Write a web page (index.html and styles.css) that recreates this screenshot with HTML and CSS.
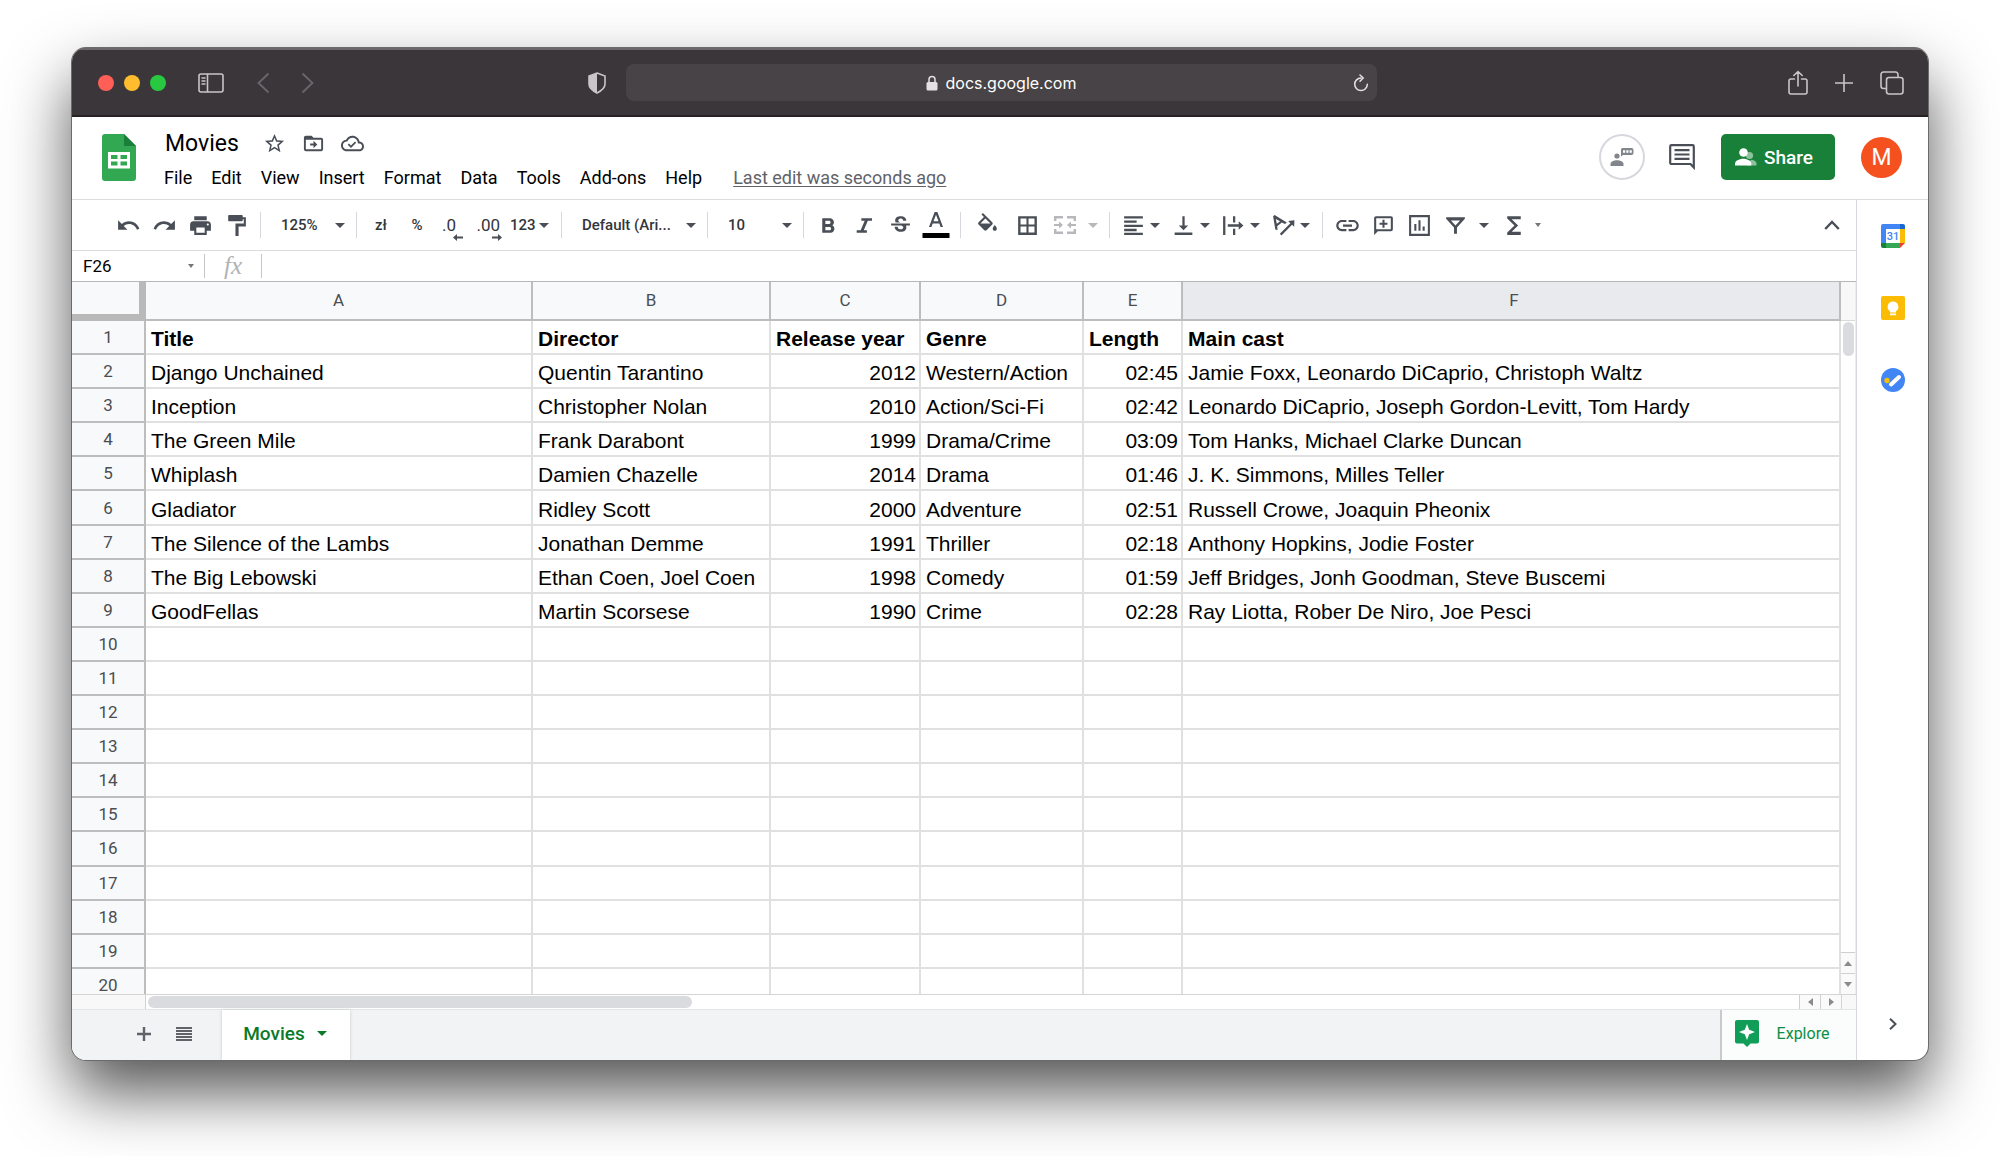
FILE: index.html
```html
<!DOCTYPE html>
<html lang="en">
<head>
<meta charset="utf-8">
<title>Movies</title>
<link rel="stylesheet" href="styles.css">
</head>
<body>
<div class="window">
  <header class="browser-bar">
    <div class="browser-left">
      <div class="lights"><span class="light red"></span><span class="light amber"></span><span class="light green"></span></div>
      <button class="chrome-btn sidebar-btn" aria-label="Sidebar"><svg width="26" height="20" viewBox="0 0 26 20" fill="none" stroke="#c9c5c9" stroke-width="1.6"><rect x="1" y="1" width="24" height="18" rx="2"/><path d="M9.5 1v18M3.5 5h4M3.500 8h4M3.500 11h4"/></svg></button>
      <button class="chrome-btn back-btn" aria-label="Back"><svg width="12" height="20" viewBox="0 0 12 20" fill="none" stroke="#6b666b" stroke-width="1.8" stroke-linecap="round"><path d="M11 1 1.500 10 11 19"/></svg></button>
      <button class="chrome-btn" aria-label="Forward"><svg width="12" height="20" viewBox="0 0 12 20" fill="none" stroke="#6b666b" stroke-width="1.8" stroke-linecap="round"><path d="M1 1l9.500 9L1 19"/></svg></button>
      <button class="chrome-btn shield-btn" aria-label="Privacy report"><svg width="18" height="22" viewBox="0 0 18 22"><path d="M9 1 17 4v8c0 4-3 6.500-8 9-5-2.500-8-5-8-9V4z" fill="none" stroke="#c9c5c9" stroke-width="1.600"/><path d="M9 1v20c-5-2.500-8-5-8-9V4z" fill="#c9c5c9"/></svg></button>
    </div>
    <div class="address">
      <span class="address-text"><svg width="12" height="16" viewBox="0 0 12 16"><path d="M3 7V4.500a3 3 0 0 1 6 0V7" fill="none" stroke="#e3e1e3" stroke-width="1.500"/><rect x=".5" y="7" width="11" height="8.500" rx="1.500" fill="#e3e1e3"/></svg>docs.google.com</span>
      <button class="chrome-btn reload-btn" aria-label="Reload"><svg width="16" height="18" viewBox="0 0 16 18" fill="none" stroke="#e3e1e3" stroke-width="1.500" stroke-linecap="round"><path d="M8 4a6.300 6.300 0 1 0 6.300 6.300"/><path d="M7 1l3.200 3L7 7.200"/></svg></button>
    </div>
    <div class="browser-right">
      <button class="chrome-btn" aria-label="Share page"><svg width="20" height="26" viewBox="0 0 20 26" fill="none" stroke="#c9c5c9" stroke-width="1.600" stroke-linecap="round"><path d="M6.500 9H3a2 2 0 0 0-2 2v11a2 2 0 0 0 2 2h14a2 2 0 0 0 2-2V11a2 2 0 0 0-2-2h-3.500M10 16V1.500M5.800 5.500 10 1.500l4.200 4"/></svg></button>
      <button class="chrome-btn" aria-label="New tab"><svg width="18" height="18" viewBox="0 0 18 18" fill="none" stroke="#c9c5c9" stroke-width="1.600"><path d="M9 0v18M0 9h18"/></svg></button>
      <button class="chrome-btn" aria-label="Tab overview"><svg width="24" height="24" viewBox="0 0 24 24" fill="none" stroke="#c9c5c9" stroke-width="1.600"><path d="M6 17.500H3.500a2.500 2.500 0 0 1-2.500-2.500V3.500A2.500 2.500 0 0 1 3.500 1h12A2.500 2.500 0 0 1 18 3.500V6"/><rect x="6.500" y="6.500" width="16.500" height="16.500" rx="2.500"/></svg></button>
    </div>
  </header>

  <section class="app-header">
    <svg class="logo" width="34" height="47" viewBox="0 0 34 47"><path d="M3 0h19l12 12v32a3 3 0 0 1-3 3H3a3 3 0 0 1-3-3V3a3 3 0 0 1 3-3z" fill="#33a852"/><path d="M22 0l12 12H22z" fill="#188038"/><path d="M6 18h22v16.500H6z" fill="#fff"/><path d="M9 21h6.500v4H9zM18.500 21H25v4h-6.500zM9 27.500h6.500v4H9zM18.500 27.500H25v4h-6.500z" fill="#33a852"/></svg>
    <div class="doc">
      <div class="doc-title">
        <h1>Movies</h1>
        <button class="icon-btn" aria-label="Star"><svg class="ico small" viewBox="0 0 24 24"><path d="M22 9.240l-7.190-.62L12 2 9.190 8.630 2 9.240l5.460 4.730L5.820 21 12 17.270 18.180 21l-1.630-7.030L22 9.240zM12 15.400l-3.760 2.270 1-4.280-3.320-2.880 4.380-.38L12 6.100l1.710 4.040 4.380.38-3.320 2.880 1 4.280L12 15.400z"/></svg></button>
        <button class="icon-btn" aria-label="Move"><svg class="ico small" viewBox="0 0 24 24"><path d="M20 6h-8l-2-2H4c-1.100 0-2 .9-2 2v12c0 1.100.9 2 2 2h16c1.100 0 2-.9 2-2V8c0-1.100-.9-2-2-2zm0 12H4V8h16v10zM12 17l4-4-4-4v3H8.500v2H12z"/></svg></button>
        <button class="icon-btn" aria-label="Saved to Drive"><svg class="ico small" viewBox="0 0 24 24"><path d="M19.350 10.040C18.670 6.590 15.640 4 12 4 9.110 4 6.600 5.640 5.350 8.040 2.340 8.360 0 10.910 0 14c0 3.310 2.690 6 6 6h13c2.760 0 5-2.240 5-5 0-2.640-2.050-4.780-4.650-4.960zM19 18H6c-2.210 0-4-1.790-4-4 0-2.050 1.530-3.760 3.560-3.970l1.070-.11.5-.95C8.080 7.140 9.940 6 12 6c2.620 0 4.880 1.860 5.390 4.430l.3 1.500 1.530.11c1.560.1 2.780 1.410 2.780 2.960 0 1.650-1.350 3-3 3zm-8.600-3.800l-2.100-2.100-1.300 1.300 3.400 3.400 5.500-5.500-1.300-1.300z"/></svg></button>
      </div>
      <nav class="menu">
        <button>File</button><button>Edit</button><button>View</button><button>Insert</button><button>Format</button><button>Data</button><button>Tools</button><button>Add-ons</button><button>Help</button>
        <a href="#history">Last edit was seconds ago</a>
      </nav>
    </div>
    <div class="actions">
      <button class="present" aria-label="Present"><svg width="24" height="20" viewBox="0 0 24 20"><circle cx="7" cy="9" r="2.600" fill="#80868b"/><path d="M0.500 19v-2c0-2.600 3.500-3.800 6.500-3.800s6.500 1.200 6.500 3.800v2z" fill="#80868b"/><path d="M12.500 1h9a2 2 0 0 1 2 2v3a2 2 0 0 1-2 2h-8.500l-2 1.500V2.500A1.500 1.500 0 0 1 12.500 1z" fill="#80868b"/><path d="M13 3.200h2.200v2.600H13zM16.300 3.200h2.200v2.600h-2.200zM19.600 3.200h2.200v2.600h-2.200z" fill="#fff"/></svg></button>
      <button class="icon-btn comments" aria-label="Comments"><svg width="26" height="26" viewBox="0 0 26 26" fill="none" stroke="#4a4f57" stroke-width="2.200"><path d="M24.800 23.500 21.500 20H2.500A1.300 1.300 0 0 1 1.200 18.700V2.400A1.300 1.300 0 0 1 2.500 1.100h21A1.300 1.300 0 0 1 24.800 2.400z"/><path d="M5.500 6.200h15M5.500 10.500h15M5.500 14.800h15"/></svg></button>
      <button class="share"><svg width="22" height="18" viewBox="0 0 22 18"><circle cx="14.500" cy="7.500" r="3.600" fill="#8dc19b"/><path d="M12 17.500h9.500v-2c0-2.300-3-3.600-5.500-3.800z" fill="#8dc19b"/><circle cx="8.500" cy="4.500" r="4.300" fill="#fff"/><path d="M0 17.500v-2c0-3.300 5.500-4.800 8.300-4.800s8 1.500 8 4.800v2z" fill="#fff"/></svg>Share</button>
      <button class="avatar" aria-label="Account">M</button>
    </div>
  </section>

  <div class="workspace">
    <main class="editor">
      <div class="toolbar">
        <button class="tb" aria-label="Undo"><svg class="ico" viewBox="0 0 24 24"><path d="M12.500 8c-2.650 0-5.050.99-6.900 2.600L2 7v9h9l-3.620-3.620c1.390-1.160 3.160-1.880 5.120-1.880 3.540 0 6.550 2.310 7.600 5.500l2.370-.78C21.080 11.030 17.150 8 12.500 8z"/></svg></button>
        <button class="tb" aria-label="Redo"><svg class="ico" viewBox="0 0 24 24"><path d="M18.400 10.600C16.550 8.990 14.150 8 11.500 8c-4.650 0-8.580 3.030-9.960 7.220L3.900 16c1.050-3.190 4.050-5.500 7.600-5.500 1.950 0 3.730.72 5.120 1.880L13 16h9V7l-3.600 3.600z"/></svg></button>
        <button class="tb" aria-label="Print"><svg class="ico" viewBox="0 0 24 24"><path d="M19 8H5c-1.660 0-3 1.340-3 3v6h4v4h12v-4h4v-6c0-1.660-1.340-3-3-3zm-3 11H8v-5h8v5zm3-7c-.55 0-1-.45-1-1s.45-1 1-1 1 .45 1 1-.45 1-1 1zM18 3H6v4h12V3z"/></svg></button>
        <button class="tb" aria-label="Paint format"><svg class="ico" viewBox="0 0 24 24"><path d="M18 4V3c0-.55-.45-1-1-1H5c-.55 0-1 .45-1 1v4c0 .55.450 1 1 1h12c.55 0 1-.45 1-1V6h1v4h-8v12h3v-9h7V4h-3z"/></svg></button>
        <span class="sep"></span>
        <select class="pick zoom-pick" aria-label="Zoom"><option>125%</option></select>
        <span class="sep"></span>
        <button class="tb text">zł</button>
        <button class="tb text">%</button>
        <button class="tb decimal less" aria-label="Decrease decimal places"><span>.0</span><svg width="10" height="7" viewBox="0 0 10 7"><path d="M0 3.500 4 0v2.500h6v2H4V7z"/></svg></button>
        <button class="tb decimal more" aria-label="Increase decimal places"><span>.00</span><svg width="10" height="7" viewBox="0 0 10 7"><path d="M10 3.500 6 0v2.500H0v2h6V7z"/></svg></button>
        <button class="tb text combo"><span class="lead">123</span><span class="caret"></span></button>
        <span class="sep"></span>
        <select class="pick font-pick" aria-label="Font"><option>Default (Ari...</option></select>
        <span class="sep"></span>
        <select class="pick zoom-pick" aria-label="Font size"><option>10</option></select>
        <span class="sep"></span>
        <button class="tb" aria-label="Bold"><svg class="ico" viewBox="0 0 24 24"><path d="M15.600 11.790c.97-.67 1.650-1.770 1.650-2.790 0-2.260-1.750-4-4-4H6v14h8c2.090 0 3.700-1.700 3.700-3.790 0-1.520-.86-2.820-2.100-3.420zM9 7.500h3.500c.83 0 1.500.67 1.500 1.500s-.67 1.500-1.500 1.500H9v-3zm4 9H9v-3h4c.83 0 1.500.67 1.500 1.500s-.67 1.500-1.500 1.500z"/></svg></button>
        <button class="tb" aria-label="Italic"><svg class="ico" viewBox="0 0 24 24"><path d="M9 5v2.500h3.200L8.300 16.500H4.500V19h9.800v-2.500h-3L15.200 7.500h4V5z"/></svg></button>
        <button class="tb" aria-label="Strikethrough"><svg class="ico" viewBox="0 0 24 24"><path d="M7.240 8.750c-.26-.48-.39-1.030-.39-1.670 0-.61.130-1.160.4-1.670.26-.5.630-.93 1.110-1.290.48-.35 1.050-.63 1.700-.83.660-.19 1.390-.29 2.180-.29.810 0 1.540.11 2.210.34.660.22 1.230.54 1.690.94.470.4.830.88 1.080 1.430.25.55.380 1.150.38 1.810h-3.010c0-.31-.05-.59-.15-.85-.09-.27-.24-.49-.44-.68-.2-.19-.45-.33-.75-.44-.3-.1-.66-.16-1.060-.16-.39 0-.74.04-1.030.13-.29.090-.53.210-.72.360-.19.160-.34.340-.44.550-.1.210-.15.430-.15.660 0 .48.250.88.740 1.210.38.25.77.48 1.410.7H7.390c-.05-.08-.11-.17-.15-.25zM21 12v-2H3v2h9.620c.18.070.4.140.55.200.37.170.660.340.870.51s.350.360.430.570c.7.200.11.430.11.690 0 .23-.5.450-.14.660-.9.200-.23.380-.42.530-.19.150-.42.260-.71.350-.29.080-.63.130-1.010.13-.43 0-.83-.04-1.180-.13s-.66-.23-.91-.42c-.25-.19-.45-.44-.59-.75s-.25-.76-.25-1.210H6.400c0 .55.080 1.130.24 1.580s.37.850.650 1.210c.28.350.600.660.980.92.370.26.78.480 1.220.65.440.17.900.3 1.380.39.480.08.960.13 1.440.13.800 0 1.530-.09 2.180-.28s1.210-.45 1.670-.79c.46-.34.820-.77 1.070-1.270s.38-1.070.380-1.710c0-.6-.1-1.140-.31-1.610-.05-.11-.11-.23-.17-.33H21z"/></svg></button>
        <button class="tb" aria-label="Text color"><svg width="28" height="28" viewBox="0 0 28 28"><path d="M12.600 1 7 16h2.400l1.300-3.500h6.600l1.300 3.500H21L15.400 1zm-1.100 9.300L14 3.700l2.500 6.600z" fill="#4a4f57"/><path d="M0.500 22h27v5h-27z" fill="#000"/></svg></button>
        <span class="sep"></span>
        <button class="tb wide" aria-label="Fill color"><svg class="ico" viewBox="0 0 24 24"><path d="M16.560 8.940 7.620 0 6.210 1.410l2.380 2.380-5.150 5.150c-.59.590-.59 1.540 0 2.120l5.500 5.500c.29.290.68.440 1.060.44s.77-.15 1.060-.44l5.500-5.500c.59-.58.59-1.530 0-2.120zM5.210 10 10 5.210 14.790 10zM19 11.500s-2 2.170-2 3.500c0 1.100.9 2 2 2s2-.9 2-2c0-1.330-2-3.500-2-3.500z"/></svg></button>
        <button class="tb wide" aria-label="Borders"><svg class="ico" viewBox="0 0 24 24"><path d="M3 3v18h18V3H3zm8 15.700H5.300V13H11v5.700zM11 11H5.300V5.300H11V11zm7.700 7.700H13V13h5.700v5.700zm0-7.700H13V5.300h5.700V11z"/></svg></button>
        <button class="tb merge" disabled aria-label="Merge cells"><svg width="22" height="20" viewBox="0 0 22 20"><path d="M0 1h9v2.400H2.400V6H0zM13 1h9v5h-2.400V3.400H13zM0 14h2.400v2.600H9V19H0zM19.600 14H22v5h-9v-2.400h6.600zM0 9h5V6.500L9 10l-4 3.500V11H0zM22 9h-5V6.500L13 10l4 3.500V11h5z"/></svg><span class="caret"></span></button>
        <span class="sep"></span>
        <button class="tb combo" aria-label="Horizontal align"><svg class="ico" viewBox="0 0 24 24"><path d="M3 3h18v2.200H3zM3 7.200h12v2.200H3zM3 11.200h18v2.200H3zM3 15.200h12v2.200H3zM3 19h18v2.200H3z"/></svg><span class="caret"></span></button>
        <button class="tb combo" aria-label="Vertical align"><svg class="ico" viewBox="0 0 24 24"><path d="M16.500 12h-3.400V3h-2.200v9H7.500l4.500 4.500zM3.500 18.800v2.400h17v-2.400z"/></svg><span class="caret"></span></button>
        <button class="tb combo" aria-label="Text wrapping"><svg class="ico" viewBox="0 0 24 24"><path d="M2 3h2.200v18H2zM11.500 3h2.200v6h-2.200zM11.500 15h2.200v6h-2.200zM6.500 10.900H17V8l4.500 4-4.500 4v-2.900H6.500z"/></svg><span class="caret"></span></button>
        <button class="tb combo" aria-label="Text rotation"><svg class="ico" viewBox="0 0 24 24"><path d="M2 3l2.200 13h2.200l-.5-3.300 4.500-3.500 3 1.300 1.800-1.300L3.500 2zm2.600 2.800 4.100 2.200-3.100 2.400zM22.500 7l-6 .7 2.100 2.100L8.500 20l1.500 1.500 10.200-10.200 2 2z"/></svg><span class="caret"></span></button>
        <span class="sep"></span>
        <button class="tb" aria-label="Insert link"><svg width="27" height="27" viewBox="0 0 24 24"><path d="M3.900 12c0-1.710 1.390-3.100 3.100-3.100h4V7H7c-2.760 0-5 2.240-5 5s2.240 5 5 5h4v-1.900H7c-1.710 0-3.100-1.390-3.100-3.100zM8 13h8v-2H8v2zm9-6h-4v1.900h4c1.710 0 3.100 1.390 3.100 3.100s-1.390 3.100-3.100 3.100h-4V17h4c2.760 0 5-2.240 5-5s-2.240-5-5-5z"/></svg></button>
        <button class="tb" aria-label="Insert comment"><svg class="ico" viewBox="0 0 24 24"><path d="M4.800 3A1.800 1.800 0 0 0 3 4.800V21l3.600-3.600h12.600a1.800 1.800 0 0 0 1.800-1.800V4.800A1.800 1.800 0 0 0 19.200 3zM5 5h14v10.500H5zM11 6.500v2.800H8.200v2H11v2.800h2v-2.800h2.800v-2H13V6.500z"/></svg></button>
        <button class="tb" aria-label="Insert chart"><svg class="ico" viewBox="0 0 24 24"><path d="M2 2v20h20V2zm2 2h16v16H4zM7 10.500h2V17H7zM11 7h2v10h-2zM15 13h2v4h-2z"/></svg></button>
        <button class="tb filter" aria-label="Filter"><svg class="ico" viewBox="0 0 24 24"><path d="M3 4h18v1.500l-7.600 8.300V20h-2.800v-6.200L3 5.500zm4.600 3.200L12 12l4.400-4.800z"/></svg><span class="caret"></span></button>
        <button class="tb combo" aria-label="Functions"><svg class="ico" viewBox="0 0 24 24"><path d="M18 3H5v2.200l7 6.800-7 6.800V21h13v-3H9.300l6.200-6-6.200-6H18z"/></svg><span class="caret tiny"></span></button>
        <button class="collapse" aria-label="Hide the menus"><svg width="16" height="10" viewBox="0 0 16 10" fill="none" stroke="#4a4f57" stroke-width="2.400"><path d="M1.200 9 8 2l6.800 7"/></svg></button>
      </div>

      <div class="formula">
        <input class="name-box" aria-label="Name box" value="F26">
        <span class="caret tiny"></span>
        <span class="rule"></span>
        <label class="fx" for="fx">fx</label>
        <span class="rule"></span>
        <input class="fx-input" id="fx">
      </div>

      <div class="grid">
        <div class="viewport">
          <table>
            <colgroup><col class="c-n"><col class="c-a"><col class="c-b"><col class="c-c"><col class="c-d"><col class="c-e"><col></colgroup>
            <thead><tr><td class="corner"></td><th>A</th><th>B</th><th>C</th><th>D</th><th>E</th><th class="current">F</th></tr></thead>
            <tbody>
              <tr class="titles"><th>1</th><td>Title</td><td>Director</td><td>Release year</td><td>Genre</td><td>Length</td><td>Main cast</td></tr>
              <tr><th>2</th><td>Django Unchained</td><td>Quentin Tarantino</td><td class="num">2012</td><td>Western/Action</td><td class="num">02:45</td><td>Jamie Foxx, Leonardo DiCaprio, Christoph Waltz</td></tr>
              <tr><th>3</th><td>Inception</td><td>Christopher Nolan</td><td class="num">2010</td><td>Action/Sci-Fi</td><td class="num">02:42</td><td>Leonardo DiCaprio, Joseph Gordon-Levitt, Tom Hardy</td></tr>
              <tr><th>4</th><td>The Green Mile</td><td>Frank Darabont</td><td class="num">1999</td><td>Drama/Crime</td><td class="num">03:09</td><td>Tom Hanks, Michael Clarke Duncan</td></tr>
              <tr><th>5</th><td>Whiplash</td><td>Damien Chazelle</td><td class="num">2014</td><td>Drama</td><td class="num">01:46</td><td>J. K. Simmons, Milles Teller</td></tr>
              <tr><th>6</th><td>Gladiator</td><td>Ridley Scott</td><td class="num">2000</td><td>Adventure</td><td class="num">02:51</td><td>Russell Crowe, Joaquin Pheonix</td></tr>
              <tr><th>7</th><td>The Silence of the Lambs</td><td>Jonathan Demme</td><td class="num">1991</td><td>Thriller</td><td class="num">02:18</td><td>Anthony Hopkins, Jodie Foster</td></tr>
              <tr><th>8</th><td>The Big Lebowski</td><td>Ethan Coen, Joel Coen</td><td class="num">1998</td><td>Comedy</td><td class="num">01:59</td><td>Jeff Bridges, Jonh Goodman, Steve Buscemi</td></tr>
              <tr><th>9</th><td>GoodFellas</td><td>Martin Scorsese</td><td class="num">1990</td><td>Crime</td><td class="num">02:28</td><td>Ray Liotta, Rober De Niro, Joe Pesci</td></tr>
              <tr><th>10</th><td></td><td></td><td></td><td></td><td></td><td></td></tr>
              <tr><th>11</th><td></td><td></td><td></td><td></td><td></td><td></td></tr>
              <tr><th>12</th><td></td><td></td><td></td><td></td><td></td><td></td></tr>
              <tr><th>13</th><td></td><td></td><td></td><td></td><td></td><td></td></tr>
              <tr><th>14</th><td></td><td></td><td></td><td></td><td></td><td></td></tr>
              <tr><th>15</th><td></td><td></td><td></td><td></td><td></td><td></td></tr>
              <tr><th>16</th><td></td><td></td><td></td><td></td><td></td><td></td></tr>
              <tr><th>17</th><td></td><td></td><td></td><td></td><td></td><td></td></tr>
              <tr><th>18</th><td></td><td></td><td></td><td></td><td></td><td></td></tr>
              <tr><th>19</th><td></td><td></td><td></td><td></td><td></td><td></td></tr>
              <tr><th>20</th><td></td><td></td><td></td><td></td><td></td><td></td></tr>
            </tbody>
          </table>
        </div>
        <div class="vscroll">
          <div class="vscroll-head"></div>
          <div class="vthumb"></div>
          <button class="step first" aria-label="Scroll up"><svg width="8" height="5" viewBox="0 0 8 5"><path d="M4 0l4 5H0z"/></svg></button>
          <button class="step" aria-label="Scroll down"><svg width="8" height="5" viewBox="0 0 8 5"><path d="M4 5l4-5H0z"/></svg></button>
        </div>
        <div class="hscroll">
          <div class="hscroll-head"></div>
          <div class="htrack"><div class="hthumb"></div></div>
          <button class="hstep" aria-label="Scroll left"><svg width="5" height="8" viewBox="0 0 5 8"><path d="M0 4l5-4v8z"/></svg></button>
          <button class="hstep" aria-label="Scroll right"><svg width="5" height="8" viewBox="0 0 5 8"><path d="M5 4L0 0v8z"/></svg></button>
        </div>
        <div class="scroll-corner"></div>
      </div>

      <footer class="tabs">
        <button class="tab-btn add" aria-label="Add sheet"><svg width="14" height="14" viewBox="0 0 14 14" fill="none" stroke="#5f6368" stroke-width="2.400"><path d="M7 0v14M0 7h14"/></svg></button>
        <button class="tab-btn list" aria-label="All sheets"><svg width="16" height="14" viewBox="0 0 16 14"><path d="M0 0h16v2H0zM0 3h16v2H0zM0 6h16v2H0zM0 9h16v2H0zM0 12h16v2H0z" fill="#5f6368"/></svg></button>
        <button class="sheet-tab">Movies<span class="caret"></span></button>
        <button class="explore"><svg width="24" height="27" viewBox="0 0 24 27"><path d="M2 0h20a2 2 0 0 1 2 2v19.500a2 2 0 0 1-2 2h-6.500L12 27l-3.500-3.500H2a2 2 0 0 1-2-2V2a2 2 0 0 1 2-2z" fill="#0f9d58"/><path d="M12 4l2.200 5.800L20 12l-5.800 2.200L12 20l-2.200-5.800L4 12l5.800-2.200z" fill="#fff"/></svg>Explore</button>
      </footer>
    </main>

    <aside class="side-panel">
      <button class="icon-btn" aria-label="Calendar"><svg width="24" height="24" viewBox="0 0 24 24"><path d="M2 0h17v5H5v14H0V2a2 2 0 0 1 2-2z" fill="#4285f4"/><path d="M19 0h3a2 2 0 0 1 2 2v3h-5z" fill="#1967d2"/><path d="M19 5h5v14h-5z" fill="#fbbc04"/><path d="M5 19h14v5H5z" fill="#34a853"/><path d="M0 19h5v5H2a2 2 0 0 1-2-2z" fill="#188038"/><path d="M19 19h5l-5 5z" fill="#ea4335"/><path d="M5 5h14v14H5z" fill="#fff"/><text x="12" y="16" text-anchor="middle" class="cal-day">31</text></svg></button>
      <button class="icon-btn" aria-label="Keep"><svg width="24" height="24" viewBox="0 0 24 24"><rect width="24" height="24" rx="2" fill="#fbbc04"/><path d="M12 5.500a5.300 5.300 0 0 0-3 9.700V16.500h6v-1.300a5.300 5.300 0 0 0-3-9.700zM9 17.600h6v1.600H9z" fill="#fff"/></svg></button>
      <button class="icon-btn" aria-label="Tasks"><svg width="24" height="24" viewBox="0 0 24 24"><circle cx="12" cy="12" r="12" fill="#4285f4"/><path d="M10 16.500 18 9" stroke="#fff" stroke-width="4" stroke-linecap="round"/><circle cx="6" cy="12.500" r="2.700" fill="#fbbc04"/></svg></button>
      <button class="icon-btn panel-toggle" aria-label="Hide side panel"><svg width="8" height="12" viewBox="0 0 8 12" fill="none" stroke="#4a4f57" stroke-width="2"><path d="M1 .8 6.500 6 1 11.200"/></svg></button>
    </aside>
  </div>
</div>
</body>
</html>
```
FILE: styles.css
```css
* { box-sizing: border-box; }

body {
  margin: 0;
  min-height: 100vh;
  padding: 48px 72px 96px;
  display: flex;
  background: #fff;
  font-family: Roboto, "Liberation Sans", sans-serif;
  color: #000;
}

button, input, select {
  font: inherit;
  color: inherit;
  background: none;
  border: 0;
  padding: 0;
  margin: 0;
}
button { display: flex; align-items: center; justify-content: center; flex: none; }
svg { display: block; flex: none; }

.window {
  flex: 1;
  min-width: 0;
  display: flex;
  flex-direction: column;
  overflow: hidden;
  border-radius: 14px;
  background: #fff;
  box-shadow: 0 0 0 1px #6b6b6b, 0 32px 64px rgba(0, 0, 0, .68);
}

/* Browser chrome */
.browser-bar {
  height: 69px;
  flex: none;
  display: grid;
  grid-template-columns: 1fr minmax(0, 751px) 1fr;
  align-items: center;
  padding: 2px 24px 0 26px;
  background: #3b363a;
  border-bottom: 2px solid #272124;
  box-shadow: inset 0 2px #6a686a;
}
.browser-left { display: flex; align-items: center; }
.lights { display: flex; gap: 10px; }
.light { width: 16px; height: 16px; border-radius: 50%; }
.red { background: #ff5f57; }
.amber { background: #febc2e; }
.green { background: #28c840; }
.sidebar-btn { margin-left: 32px; }
.back-btn { margin: 0 33px; }
.shield-btn { margin: 0 20px 0 auto; }
.address {
  height: 37px;
  display: flex;
  align-items: center;
  padding-right: 8px;
  border-radius: 8px;
  background: #484346;
  color: #fff;
  font-family: Inter, Roboto, sans-serif;
  font-size: 16px;
}
.address-text { flex: 1; display: flex; align-items: center; justify-content: center; gap: 8px; padding-left: 24px; }
.browser-right { display: flex; align-items: center; justify-content: flex-end; gap: 27px; }

/* Document header */
.app-header {
  height: 83px;
  flex: none;
  display: flex;
  align-items: flex-start;
  padding: 0 26px 0 30px;
  border-bottom: 1px solid #dadce0;
}
.logo { margin-top: 17px; }
.doc { padding: 8px 0 0 28px; }
.doc-title { display: flex; align-items: center; height: 36px; gap: 14px; }
h1 { margin: 0 9px 0 1px; font-size: 23px; font-weight: 400; }
.doc-title .small { width: 23px; height: 23px; }
.doc-title .icon-btn { width: 25px; }
.menu { display: flex; align-items: center; gap: 19px; height: 33px; font-size: 18px; white-space: nowrap; }
.menu a { margin-left: 12px; color: #5f6368; text-underline-offset: 2px; }
.actions { margin-left: auto; display: flex; align-items: center; height: 80px; }
.present { width: 46px; height: 46px; border: 2px solid #d6d8de; border-radius: 50%; }
.comments { margin: 0 26px 0 24px; }
.share {
  width: 114px;
  height: 46px;
  gap: 7px;
  padding-right: 8px;
  border-radius: 5px;
  background: #188038;
  color: #fff;
  font-size: 19px;
  font-weight: 500;
}
.avatar { width: 41px; height: 41px; margin-left: 26px; border-radius: 50%; background: #f4511e; color: #fff; font-size: 23px; }

.workspace { flex: 1; min-height: 0; display: flex; }
.editor { flex: 1; min-width: 0; display: flex; flex-direction: column; }

/* Toolbar */
.toolbar {
  height: 51px;
  flex: none;
  display: flex;
  align-items: center;
  padding: 0 15px 0 38px;
  border-bottom: 1px solid #dadce0;
  color: #33363b;
  font-size: 15px;
  font-weight: 500;
}
.tb { width: 36px; height: 36px; }
.tb svg, .ico { fill: #4a4f57; }
.ico { width: 24px; height: 24px; }
.tb .ico { width: 25px; height: 25px; }
.wide { width: 40px; }
.sep { width: 1px; height: 26px; margin: 0 6px; background: #d6d8de; flex: none; }
.caret {
  width: 0;
  border: 5px solid transparent;
  border-top-color: #4a4f57;
  border-bottom: 0;
  flex: none;
}
.tiny { border-width: 3px; border-top-width: 4px; border-top-color: #777; border-bottom: 0; }
.combo { width: 50px; justify-content: space-between; padding: 0 6px 0 5px; }
.filter { width: 60px; justify-content: space-between; padding: 0 8px 0 6px; }
.merge { width: 56px; justify-content: space-between; padding: 0 5px 0 7px; opacity: .4; }
.decimal { width: 35px; flex-direction: column; align-items: flex-end; font-size: 17px; font-weight: 400; line-height: 18px; }
.decimal span { padding-top: 8px; }
.decimal svg { margin-bottom: 2px; }
.less { padding-right: 7px; }
.less span { padding-right: 7px; }
.more { padding-right: 3px; }
.more span { padding-right: 2px; }
.collapse { margin-left: auto; width: 18px; height: 36px; }
.pick {
  appearance: none;
  height: 30px;
  flex: none;
  padding: 0 24px 0 14px;
  background: url("data:image/svg+xml,%3Csvg xmlns='http://www.w3.org/2000/svg' width='10' height='5'%3E%3Cpath d='M0 0h10L5 5z' fill='%234a4f57'/%3E%3C/svg%3E") no-repeat right 5px center;
}
.zoom-pick { width: 83px; }
.font-pick { width: 133px; }

/* Formula bar */
.formula {
  height: 31px;
  flex: none;
  display: flex;
  align-items: center;
  border-bottom: 1px solid #b7b7b7;
  padding-left: 11px;
  font-size: 17px;
}
.name-box { width: 105px; }
.rule { width: 1px; height: 24px; background: #c4c6ca; }
.formula .tiny { margin-right: 10px; }
.fx { width: 56px; text-align: center; color: #b0b3b7; font: italic 25px/28px "Liberation Serif", serif; }
.fx-input { flex: 1; padding-left: 8px; }

/* Spreadsheet */
.grid {
  flex: 1;
  min-height: 400px;
  display: grid;
  grid-template: minmax(0, 1fr) 15px / minmax(0, 1fr) 15px;
}
.viewport { overflow: hidden; contain: size; }
table {
  width: 100%;
  height: 721px;
  table-layout: fixed;
  border-collapse: separate;
  border-spacing: 0;
  font: 21px/24px "Liberation Sans", Arial, sans-serif;
}
.c-n { width: 74px; }
.c-a { width: 387px; }
.c-b { width: 238px; }
.c-c { width: 150px; }
.c-d { width: 163px; }
.c-e { width: 99px; }
tbody tr { height: 34px; }
thead tr { height: 39px; }
td, th { padding: 0; border: 0 solid #e0e0e0; border-width: 0 2px 2px 0; white-space: nowrap; }
td { padding: 4px 3px 0 5px; vertical-align: middle; }
th { border-color: #bdbdbd; background: #f8f9fa; color: #4a4d52; font: 400 17px/18px Roboto, sans-serif; }
thead th { padding-bottom: 2px; }
.corner { border: solid #b9b9b9; border-width: 0 7px 7px 0; background: #f8f9fa; }
.current { padding-left: 6px; background: #e8eaed; }
.titles td { font-weight: 700; }
.num { text-align: right; }

/* Scroll bars */
.vscroll { display: flex; flex-direction: column; border-right: 1px solid #ececec; }
.vscroll-head { height: 39px; background: #f8f8f8; border-bottom: 1px solid #d9d9d9; }
.vthumb { width: 11px; height: 34px; margin: 1px auto 0 2px; border-radius: 6px; background: #dadbdf; }
.step { height: 21px; border-top: 1px solid #d0d0d0; background: #fafafa; }
.first { margin-top: auto; }
.step svg, .hstep svg { fill: #8b8b8b; }
.hscroll { display: flex; border-top: 1px solid #d4d4d4; }
.hscroll-head { width: 74px; background: #f8f8f8; border-right: 1px solid #d0d0d0; }
.htrack { flex: 1; padding: 1px 2px; }
.hthumb { width: 33%; height: 12px; border-radius: 6px; background: #dadbdf; }
.hstep { width: 21px; border-left: 1px solid #d0d0d0; background: #fafafa; }
.scroll-corner { border: solid #d4d4d4; border-width: 1px 0 0 1px; background: #f8f8f8; }

/* Sheet tabs */
.tabs {
  height: 51px;
  flex: none;
  display: flex;
  background: #f1f3f4;
  border-top: 1px solid #e3e5e7;
}
.tabs button { padding-bottom: 3px; }
.tab-btn { width: 40px; }
.add { margin-left: 52px; }
.sheet-tab {
  width: 128px;
  gap: 12px;
  margin-left: 18px;
  padding-right: 2px;
  background: #fff;
  color: #0b7a28;
  font-size: 19px;
  font-weight: 500;
  box-shadow: 0 0 3px #c4c7ca;
}
.sheet-tab .caret { border-top-color: #0b7a28; }
.explore {
  width: 136px;
  margin-left: auto;
  gap: 18px;
  padding-right: 14px;
  border-left: 2px solid #c8cacc;
  background: #fbfdfc;
  color: #0a8f45;
  font-size: 16px;
}

/* Side panel */
.side-panel {
  width: 72px;
  flex: none;
  display: flex;
  flex-direction: column;
  align-items: center;
  gap: 48px;
  padding: 24px 0 30px;
  border-left: 1px solid #d6d8de;
}
.panel-toggle { margin-top: auto; }
.cal-day { font: 500 11px Roboto, sans-serif; fill: #4285f4; }
```
